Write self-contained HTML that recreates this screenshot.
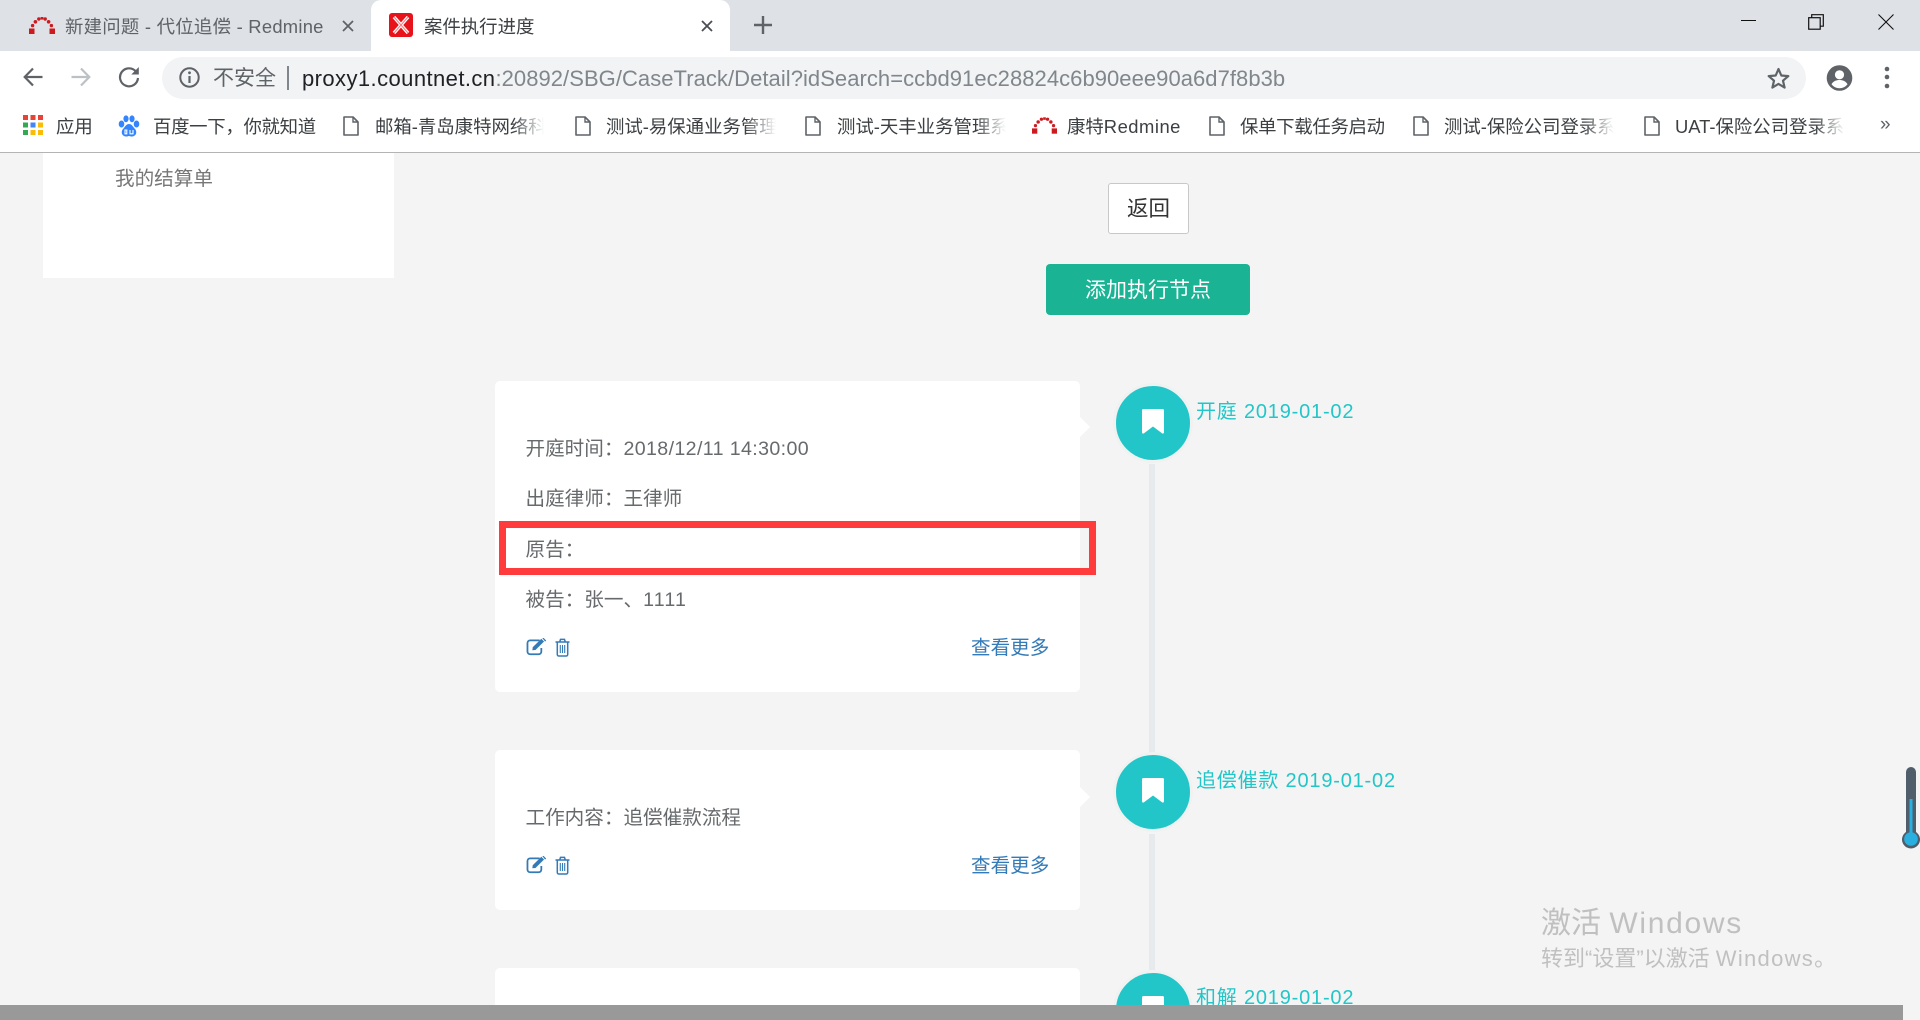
<!DOCTYPE html>
<html lang="zh-CN">
<head>
<meta charset="utf-8">
<title>案件执行进度</title>
<style>
html,body{margin:0;padding:0;width:1920px;height:1020px;overflow:hidden;background:#f4f4f4}
body{position:relative;font-family:"Liberation Sans","Noto Sans CJK SC",sans-serif;color:#676a6c}
.a{position:absolute}
.t{position:absolute;white-space:nowrap;line-height:30px;height:30px}
svg{position:absolute;overflow:visible}
.bm{font-size:18.4px;color:#3c4043}
.fade{overflow:hidden;-webkit-mask-image:linear-gradient(to right,#000 82%,transparent 100%);mask-image:linear-gradient(to right,#000 82%,transparent 100%)}
.line{font-size:19.6px;color:#676a6c}
.more{font-size:19.6px;color:#337ab7}
.ttl{font-size:20px;color:#23c6c8;letter-spacing:.8px}
.card{position:absolute;left:495px;width:585px;background:#fff;border-radius:5px}
.arrow{position:absolute;left:1080px;width:0;height:0;border-top:10px solid transparent;border-bottom:10px solid transparent;border-left:10px solid #fff}
.circ{position:absolute;left:1113px;width:74px;height:74px;background:#23c6c8;border:3px solid #f0f2f2;border-radius:50%;box-sizing:content-box}
</style>
</head>
<body>

<svg width="0" height="0" style="position:absolute">
<defs>
<symbol id="doc" viewBox="0 0 16 20"><path d="M1 1h9l5 5v13H1z" fill="#fff" stroke="#5f6368" stroke-width="1.6" stroke-linejoin="round"/><path d="M10 1v5h5" fill="none" stroke="#5f6368" stroke-width="1.4"/></symbol>
<symbol id="rm" viewBox="0 0 26 17"><g fill="#cc1a1f"><rect x="0" y="11.500" width="5.500" height="5.500"/><rect x="20.500" y="11.500" width="5.500" height="5.500"/><circle cx="3.600" cy="8.600" r="1.700"/><circle cx="22.400" cy="8.600" r="1.700"/><circle cx="6.400" cy="4.800" r="1.800"/><circle cx="19.600" cy="4.800" r="1.800"/><circle cx="9.800" cy="2" r="1.700"/><circle cx="16.200" cy="2" r="1.700"/><rect x="11.600" y="0" width="2.800" height="2.600"/></g></symbol>
<symbol id="edit" viewBox="0 0 20 17"><path d="M13 2.2H4a2.6 2.6 0 0 0-2.6 2.6v8a2.6 2.6 0 0 0 2.6 2.6h8a2.6 2.6 0 0 0 2.6-2.6V9.500" fill="none" stroke="#337ab7" stroke-width="1.7"/><path d="M6 11.600l.5-3L14.600 .7l2.600 2.600-8.200 8z" fill="#337ab7"/><path d="M15.600 0l1-.3 2.600 2.600-1 1.100z" fill="#337ab7"/></symbol>
<symbol id="trash" viewBox="0 0 16 19"><path d="M1 4h14M5.200 4l.8-2.600h4L10.800 4" fill="none" stroke="#337ab7" stroke-width="1.500"/><path d="M2.800 4.500v12a1.500 1.500 0 0 0 1.500 1.500h7.400a1.500 1.500 0 0 0 1.500-1.500v-12" fill="none" stroke="#337ab7" stroke-width="1.500"/><path d="M5.800 7v8M8 7v8M10.200 7v8" stroke="#337ab7" stroke-width="1.100"/></symbol>
<symbol id="mark" viewBox="0 0 22 25"><path d="M1.500 0h19a1.500 1.500 0 0 1 1.500 1.500V23.500a1.200 1.200 0 0 1-2 .8L11 17.500 2 24.300a1.200 1.200 0 0 1-2-.8V1.500A1.500 1.500 0 0 1 1.500 0z" fill="#fff"/></symbol>
</defs>
</svg>

<!-- tab strip -->
<div class="a" style="left:0;top:0;width:1920px;height:51px;background:#dee1e6"></div>
<div class="a" style="left:371px;top:0;width:359px;height:51px;background:#fff;border-radius:10px 10px 0 0"></div>
<svg style="left:29px;top:17px" width="26" height="17"><use href="#rm" width="26" height="17"/></svg>
<div class="t" style="left:65px;top:12px;font-size:18.4px;letter-spacing:.25px;color:#5f6368">新建问题 - 代位追偿 - Redmine</div>
<svg style="left:342px;top:20px" width="12" height="12"><path d="M1 1l10 10M11 1L1 11" stroke="#5f6368" stroke-width="1.800"/></svg>
<svg style="left:389px;top:13px" width="24" height="24"><rect width="24" height="24" rx="3" fill="#e8121a"/><path d="M5 4l14 16M19 4L5 20" stroke="#fff" stroke-width="3.400"/><path d="M5 4l14 16M19 4L5 20" stroke="#f47c80" stroke-width="1"/></svg>
<div class="t" style="left:424px;top:12px;font-size:18.4px;color:#3c4043">案件执行进度</div>
<svg style="left:701px;top:20px" width="12" height="12"><path d="M1 1l10 10M11 1L1 11" stroke="#4a4d51" stroke-width="1.800"/></svg>
<svg style="left:754px;top:16px" width="18" height="18"><path d="M9 0v18M0 9h18" stroke="#5f6368" stroke-width="2.400"/></svg>
<!-- window controls -->
<div class="a" style="left:1741px;top:20px;width:15px;height:1px;background:#111"></div>
<svg style="left:1808px;top:14px" width="16" height="16"><rect x=".7" y="3.700" width="11.500" height="11.500" fill="none" stroke="#111" stroke-width="1.200"/><path d="M3.700 3.700V.7h11.600v11.500h-3" fill="none" stroke="#111" stroke-width="1.200"/></svg>
<svg style="left:1878px;top:14px" width="16" height="16"><path d="M.5.5l15 15M15.500.5l-15 15" stroke="#111" stroke-width="1.100"/></svg>

<!-- toolbar -->
<div class="a" style="left:0;top:51px;width:1920px;height:101px;background:#fff"></div>
<div class="a" style="left:0;top:152px;width:1920px;height:1px;background:#b4b4b4"></div>
<svg style="left:23px;top:67px" width="20" height="20"><path d="M19.500 10H2M10 1.500L1.700 10l8.300 8.500" fill="none" stroke="#5f6368" stroke-width="2.200"/></svg>
<svg style="left:71px;top:67px" width="20" height="20"><path d="M.5 10H18M10 1.500l8.300 8.500-8.300 8.500" fill="none" stroke="#bdc1c6" stroke-width="2.200"/></svg>
<svg style="left:118px;top:66px" width="22" height="22"><path d="M18.300 6A9 9 0 1 0 20 12" fill="none" stroke="#5f6368" stroke-width="2.200"/><path d="M20.800 1v7.500h-7.500z" fill="#5f6368"/></svg>
<div class="a" style="left:162px;top:57px;width:1644px;height:42px;background:#f1f3f4;border-radius:21px"></div>
<svg style="left:179px;top:67px" width="21" height="21"><circle cx="10.500" cy="10.500" r="9.200" fill="none" stroke="#5f6368" stroke-width="2"/><path d="M10.500 9v7" stroke="#5f6368" stroke-width="2.200"/><circle cx="10.500" cy="5.800" r="1.400" fill="#5f6368"/></svg>
<div class="t" style="left:213px;top:64px;font-size:21px;color:#5f6368">不安全</div>
<div class="a" style="left:287px;top:66px;width:1.500px;height:24px;background:#80868b"></div>
<div class="t" style="left:302px;top:64px;font-size:22px;letter-spacing:.05px;color:#80868b"><span style="color:#202124;letter-spacing:.42px">proxy1.countnet.cn</span>:20892/SBG/CaseTrack/Detail?idSearch=ccbd91ec28824c6b90eee90a6d7f8b3b</div>
<svg style="left:1767px;top:67px" width="23" height="22"><path d="M11.500 2l2.800 6.500 7 .6-5.300 4.600 1.600 6.900-6.100-3.700-6.100 3.700 1.600-6.900L1.700 9.100l7-.6z" fill="none" stroke="#5f6368" stroke-width="2.200" stroke-linejoin="round"/></svg>
<svg style="left:1826px;top:65px" width="27" height="26"><circle cx="13.500" cy="13" r="12.800" fill="#5f6368"/><circle cx="13.500" cy="9.800" r="4.600" fill="#fff"/><path d="M5.500 19.300c1.800-3.300 5-4.300 8-4.300s6.200 1 8 4.300c-2 2.600-4.800 4-8 4s-6-1.400-8-4z" fill="#fff"/></svg>
<svg style="left:1883px;top:65px" width="8" height="25"><circle cx="4" cy="4" r="2.300" fill="#5f6368"/><circle cx="4" cy="12" r="2.300" fill="#5f6368"/><circle cx="4" cy="21" r="2.300" fill="#5f6368"/></svg>

<!-- bookmarks -->
<svg style="left:23px;top:115px" width="20" height="20"><g><rect x="0" y="0" width="5" height="5" fill="#ea4335"/><rect x="7.500" y="0" width="5" height="5" fill="#ea4335"/><rect x="15" y="0" width="5" height="5" fill="#ea4335"/><rect x="0" y="7.500" width="5" height="5" fill="#34a853"/><rect x="7.500" y="7.500" width="5" height="5" fill="#4285f4"/><rect x="15" y="7.500" width="5" height="5" fill="#fbbc05"/><rect x="0" y="15" width="5" height="5" fill="#34a853"/><rect x="7.500" y="15" width="5" height="5" fill="#fbbc05"/><rect x="15" y="15" width="5" height="5" fill="#fbbc05"/></g></svg>
<div class="t bm" style="left:56px;top:112px">应用</div>
<svg style="left:118px;top:115px" width="22" height="22"><g fill="#3385ff"><ellipse cx="3.500" cy="9" rx="2.800" ry="3.500"/><ellipse cx="8" cy="3.800" rx="2.600" ry="3.400"/><ellipse cx="14" cy="3.800" rx="2.600" ry="3.400"/><ellipse cx="18.500" cy="9" rx="2.800" ry="3.500"/><path d="M11 9c3 0 4 3 6 5s2 7-3 7.500c-1.500.2-2-.5-3-.5s-1.500.7-3 .5c-5-.5-5-5.500-3-7.500s3-5 6-5z"/></g><path d="M7 15h1.800v3.800H7zM12 15v3.800h3V15" fill="none" stroke="#fff" stroke-width="1.100"/></svg>
<div class="t bm" style="left:153px;top:112px;letter-spacing:-.3px">百度一下，你就知道</div>

<svg style="left:343px;top:116px" width="16" height="20"><use href="#doc" width="16" height="20"/></svg>
<div class="t bm fade" style="left:375px;top:112px;width:169px">邮箱-青岛康特网络科技</div>
<svg style="left:575px;top:116px" width="16" height="20"><use href="#doc" width="16" height="20"/></svg>
<div class="t bm fade" style="left:606px;top:112px;width:170px">测试-易保通业务管理系统</div>
<svg style="left:805px;top:116px" width="16" height="20"><use href="#doc" width="16" height="20"/></svg>
<div class="t bm fade" style="left:837px;top:112px;width:169px">测试-天丰业务管理系统</div>
<svg style="left:1032px;top:117px" width="25" height="17"><use href="#rm" width="25" height="17"/></svg>
<div class="t bm" style="left:1067px;top:112px">康特<span style="letter-spacing:.5px">Redmine</span></div>
<svg style="left:1209px;top:116px" width="16" height="20"><use href="#doc" width="16" height="20"/></svg>
<div class="t bm" style="left:1240px;top:112px;letter-spacing:-.3px">保单下载任务启动</div>
<svg style="left:1413px;top:116px" width="16" height="20"><use href="#doc" width="16" height="20"/></svg>
<div class="t bm fade" style="left:1444px;top:112px;width:170px">测试-保险公司登录系统</div>
<svg style="left:1644px;top:116px" width="16" height="20"><use href="#doc" width="16" height="20"/></svg>
<div class="t bm fade" style="left:1675px;top:112px;width:170px">UAT-保险公司登录系统</div>
<div class="t" style="left:1880px;top:110px;font-size:19px;color:#5f6368">»</div>

<!-- sidebar -->
<div class="a" style="left:43px;top:153px;width:351px;height:125px;background:#fff"></div>
<div class="t" style="left:115px;top:164px;font-size:19.600px;color:#777">我的结算单</div>

<!-- buttons -->
<div class="a" style="left:1108px;top:183px;width:81px;height:51px;box-sizing:border-box;background:#fff;border:1.500px solid #c8c8c8;border-radius:3px;text-align:center;line-height:50px;font-size:21.500px;color:#333">返回</div>
<div class="a" style="left:1046px;top:264px;width:204px;height:51px;background:#1ab394;border-radius:4px;text-align:center;line-height:54px;font-size:21px;color:#fff">添加执行节点</div>

<!-- timeline line -->
<div class="a" style="left:1149px;top:464px;width:6px;height:290px;background:#e7eaec"></div>
<div class="a" style="left:1149px;top:834px;width:6px;height:136px;background:#e7eaec"></div>

<!-- card 1 -->
<div class="card" style="top:381px;height:311px"></div>
<div class="arrow" style="top:417px"></div>
<div class="circ" style="top:383px"></div>
<svg style="left:1142px;top:409px" width="22" height="25"><use href="#mark" width="22" height="25"/></svg>
<div class="t ttl" style="left:1196px;top:397px">开庭 2019-01-02</div>
<div class="t line" style="left:525.500px;top:434px">开庭时间：<span style="letter-spacing:.38px">2018/12/11 14:30:00</span></div>
<div class="t line" style="left:525.500px;top:484px">出庭律师：王律师</div>
<div class="t line" style="left:525.500px;top:535px">原告：</div>
<div class="t line" style="left:525.500px;top:585px">被告：张一、<span style="letter-spacing:1.200px">1111</span></div>
<svg style="left:526px;top:638px" width="21" height="18"><use href="#edit" width="21" height="18"/></svg>
<svg style="left:554px;top:638px" width="17" height="19"><use href="#trash" width="17" height="19"/></svg>
<div class="t more" style="left:971px;top:633px">查看更多</div>
<div class="a" style="left:499px;top:521px;width:597px;height:54px;box-sizing:border-box;border:7px solid #ff3b3b"></div>

<!-- card 2 -->
<div class="card" style="top:750px;height:160px"></div>
<div class="arrow" style="top:787px"></div>
<div class="circ" style="top:752px"></div>
<svg style="left:1142px;top:778px" width="22" height="25"><use href="#mark" width="22" height="25"/></svg>
<div class="t ttl" style="left:1196px;top:766px">追偿催款 2019-01-02</div>
<div class="t line" style="left:525.500px;top:803px">工作内容：追偿催款流程</div>
<svg style="left:526px;top:856px" width="21" height="18"><use href="#edit" width="21" height="18"/></svg>
<svg style="left:554px;top:856px" width="17" height="19"><use href="#trash" width="17" height="19"/></svg>
<div class="t more" style="left:971px;top:851px">查看更多</div>

<!-- card 3 -->
<div class="card" style="top:968px;height:60px"></div>
<div class="circ" style="top:970px"></div>
<svg style="left:1142px;top:996px" width="22" height="25"><use href="#mark" width="22" height="25"/></svg>
<div class="t ttl" style="left:1196px;top:983px">和解 2019-01-02</div>

<!-- thermometer -->
<svg style="left:1900px;top:765px" width="20" height="85"><path d="M6 7a5 5 0 0 1 10 0v60a9 9 0 1 1-10 0z" fill="#4f5e6a"/><path d="M9.500 34h3v36h-3z" fill="#2ab0e0"/><circle cx="11" cy="74" r="6.800" fill="#2ab0e0"/></svg>

<!-- activation watermark -->
<div class="t" style="left:1541px;top:909px;font-size:30px;color:#c0c0c0;font-weight:400">激活 <span style="letter-spacing:1.700px">Windows</span></div>
<div class="t" style="left:1541px;top:944px;font-size:22px;color:#c0c0c0">转到“设置”以激活 <span style="letter-spacing:1.300px">Windows</span>。</div>

<!-- bottom bar -->
<div class="a" style="left:0;top:1005px;width:1903px;height:15px;background:#999"></div>
</body>
</html>
